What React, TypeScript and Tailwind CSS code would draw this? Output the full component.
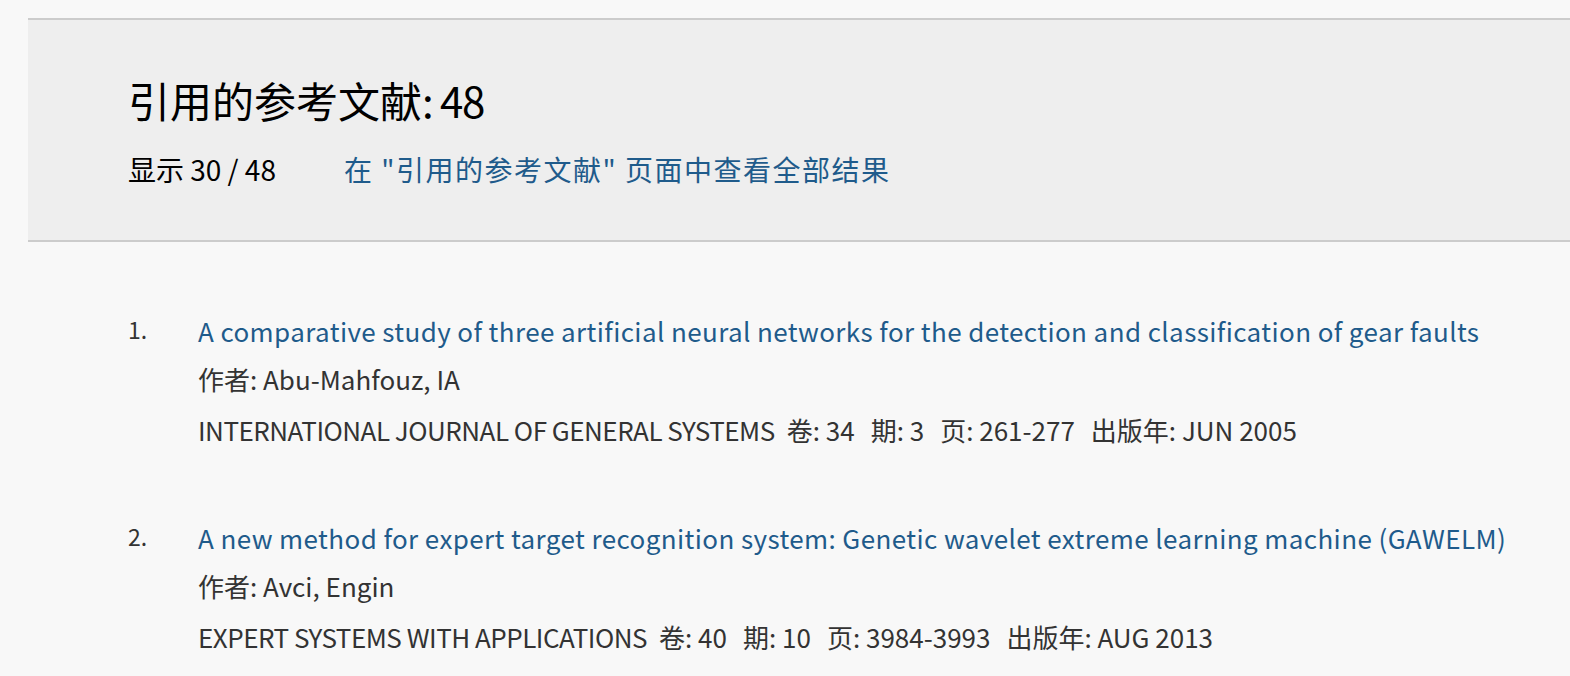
const refs = [
  {
    title: "A comparative study of three artificial neural networks for the detection and classification of gear faults",
    authors: "Abu-Mahfouz, IA",
    source: "INTERNATIONAL JOURNAL OF GENERAL SYSTEMS",
    volume: "34",
    issue: "3",
    pages: "261-277",
    published: "JUN 2005",
  },
  {
    title: "A new method for expert target recognition system: Genetic wavelet extreme learning machine (GAWELM)",
    authors: "Avci, Engin",
    source: "EXPERT SYSTEMS WITH APPLICATIONS",
    volume: "40",
    issue: "10",
    pages: "3984-3993",
    published: "AUG 2013",
  },
];

export default function App() {
  return (
    <div
      className="min-h-[676px] overflow-hidden bg-[#f8f8f8] pt-[18px] text-[#333]"
      style={{ fontFamily: '"Noto Sans CJK SC", "Noto Sans", sans-serif' }}
    >
      {/* Header panel */}
      <div className="ml-[28px] h-[224px] border-y-2 border-[#cccccc] bg-[#eeeeee] pl-[100px] pt-[55px]">
        <h1 className="text-[42px] leading-[50px] font-normal text-black">
          引用的参考文献<span className="tracking-[-1.5px]">: 48</span>
        </h1>
        <div className="mt-[27px] flex text-[28px] leading-[34px]">
          <span className="text-black">显示 30 / 48</span>
          <a href="#" className="ml-[68px] tracking-[1.5px] text-[#1f5b8b]">
            在 "引用的参考文献" 页面中查看全部结果
          </a>
        </div>
      </div>

      {/* Reference list */}
      <ol className="mt-[64px] pl-[128px]">
        {refs.map((r, i) => (
          <li key={i} className="mb-[58px] flex">
            <span className="w-[70px] shrink-0 pt-[3px] text-[23px] leading-[40px]">{i + 1}.</span>
            <div className="text-[26px] leading-[50px]">
              <a href="#" className="block tracking-[0.4px] text-[#1f5b8b]">
                {r.title}
              </a>
              <div className="-mt-[2px] mb-[1px]">作者: {r.authors}</div>
              <div className="flex">
                <span className="mr-[12px] tracking-[-0.5px]">{r.source}</span>
                <span className="mr-[16px]">卷: {r.volume}</span>
                <span className="mr-[16px]">期: {r.issue}</span>
                <span className="mr-[16px]">页: {r.pages}</span>
                <span>出版年: {r.published}</span>
              </div>
            </div>
          </li>
        ))}
      </ol>
    </div>
  );
}
